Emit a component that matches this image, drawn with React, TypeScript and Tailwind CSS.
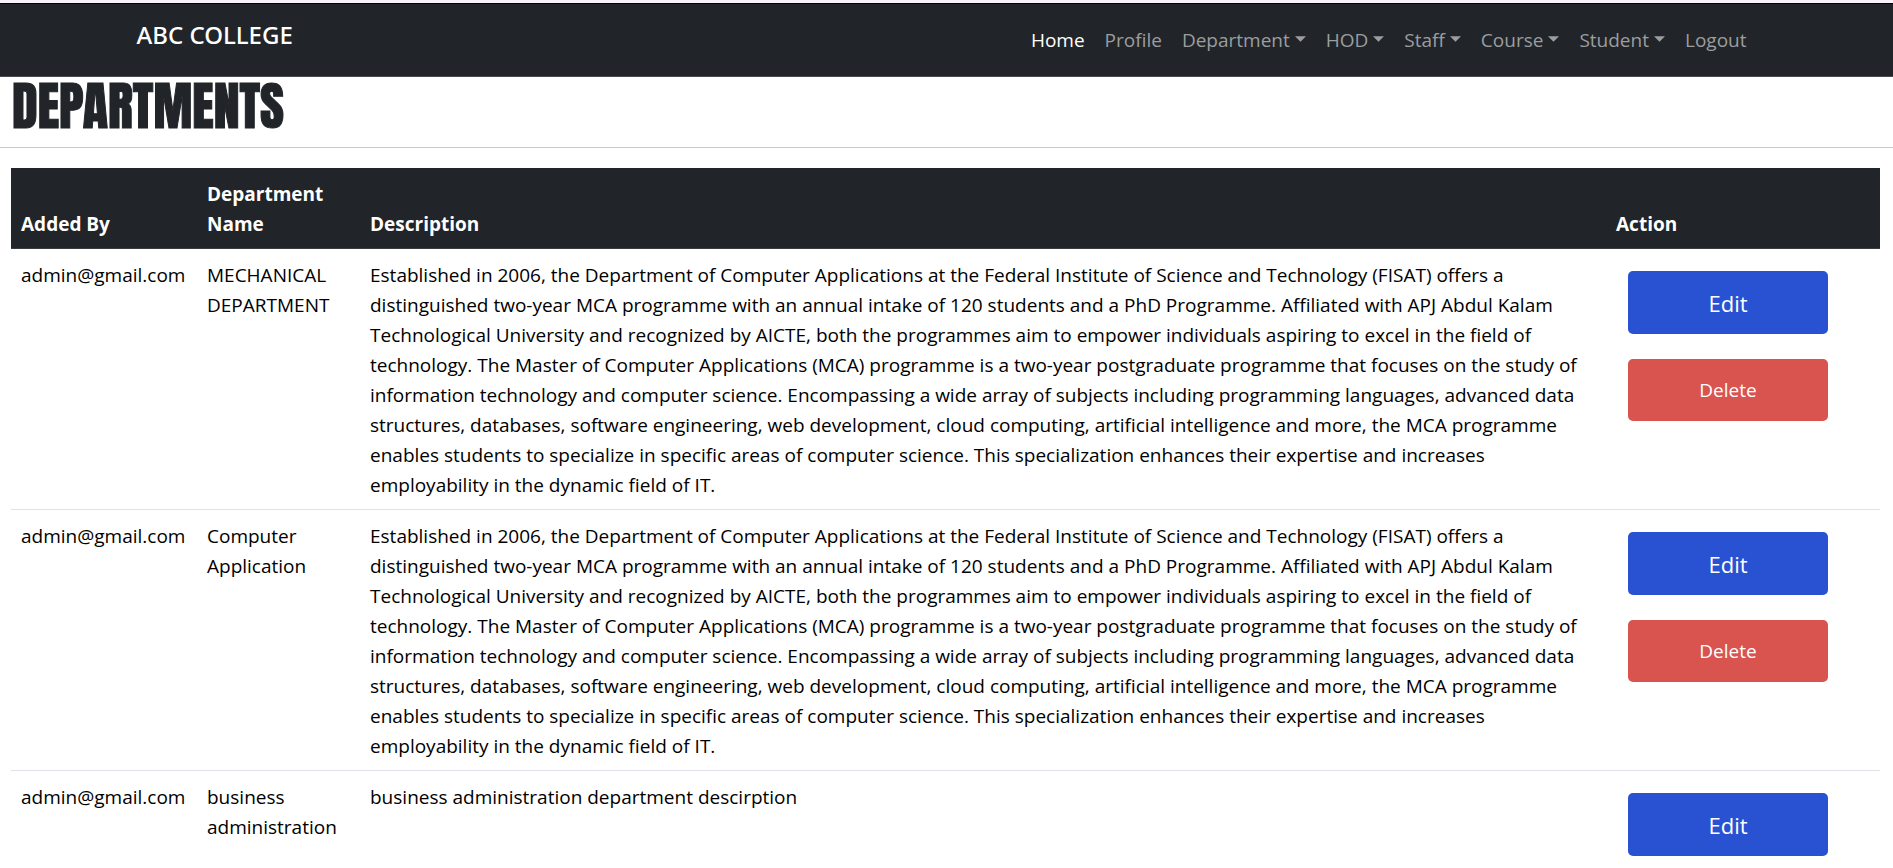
type NavLink = { label: string; menu?: boolean; active?: boolean };
type Department = { addedBy: string; name: string; description: string };

const links: NavLink[] = [
  { label: "Home", active: true },
  { label: "Profile" },
  { label: "Department", menu: true },
  { label: "HOD", menu: true },
  { label: "Staff", menu: true },
  { label: "Course", menu: true },
  { label: "Student", menu: true },
  { label: "Logout" },
];

const mcaDescription =
  "Established in 2006, the Department of Computer Applications at the Federal Institute of Science and Technology (FISAT) offers a distinguished two-year MCA programme with an annual intake of 120 students and a PhD Programme. Affiliated with APJ Abdul Kalam Technological University and recognized by AICTE, both the programmes aim to empower individuals aspiring to excel in the field of technology. The Master of Computer Applications (MCA) programme is a two-year postgraduate programme that focuses on the study of information technology and computer science. Encompassing a wide array of subjects including programming languages, advanced data structures, databases, software engineering, web development, cloud computing, artificial intelligence and more, the MCA programme enables students to specialize in specific areas of computer science. This specialization enhances their expertise and increases employability in the dynamic field of IT.";

const departments: Department[] = [
  { addedBy: "admin@gmail.com", name: "MECHANICAL DEPARTMENT", description: mcaDescription },
  { addedBy: "admin@gmail.com", name: "Computer Application", description: mcaDescription },
  {
    addedBy: "admin@gmail.com",
    name: "business administration",
    description: "business administration department descirption",
  },
];

function Caret() {
  return (
    <svg className="ml-[5px] mb-[2px] h-[6px] w-[11px]" viewBox="0 0 12 6" fill="currentColor" aria-hidden="true">
      <path d="M0 0H12L6 6Z" />
    </svg>
  );
}

function Navbar() {
  return (
    <nav className="border-t border-b border-t-black border-b-[#4b4d55] bg-[#212529]">
      <div className="mx-auto flex h-[72px] max-w-[1650px] justify-between px-[15px]">
        <a href="#" className="mt-3 font-['Noto_Sans',sans-serif] text-2xl font-medium leading-[38px] text-white">
          ABC COLLEGE
        </a>
        <ul className="flex items-center">
          {links.map((link) => (
            <li key={link.label}>
              <a
                href="#"
                className={
                  link.active
                    ? "flex items-center px-[10px] text-white"
                    : "flex items-center px-[10px] text-[#9b9d9f]"
                }
              >
                {link.label}
                {link.menu && <Caret />}
              </a>
            </li>
          ))}
        </ul>
      </div>
    </nav>
  );
}

export default function App() {
  return (
    <div className="bg-white font-['Open_Sans',sans-serif] text-[19px] leading-[30px] text-[#212529]">
      <div className="h-[3px] bg-[#f9f1fa]" />
      <Navbar />
      <main>
        <h1 className="h-[71px] border-b border-[#c8c9ca] px-3 font-['Impact','Anton','Roboto_Condensed',sans-serif] text-[52px] leading-[58px] [-webkit-text-stroke:1px_#212529]">
          DEPARTMENTS
        </h1>
        <div className="pt-5 pr-[13px] pl-[11px]">
          <table className="w-full table-fixed border-collapse text-left">
            <colgroup>
              <col className="w-[186px]" />
              <col className="w-[163px]" />
              <col />
              <col className="w-[274px]" />
            </colgroup>
            <thead className="bg-[#212529] align-bottom text-white">
              <tr className="border-b border-[#373b3e]">
                <th className="px-[10px] pt-[11px] pb-[9px] font-bold">Added By</th>
                <th className="px-[10px] pt-[11px] pb-[9px] font-bold">Department Name</th>
                <th className="px-[10px] pt-[11px] pb-[9px] font-bold">Description</th>
                <th className="px-[10px] pt-[11px] pb-[9px] font-bold">Action</th>
              </tr>
            </thead>
            <tbody className="align-top text-black">
              {departments.map((department) => (
                <tr key={department.name} className="border-b border-[#dee2e6]">
                  <td className="px-[10px] pt-[11px] pb-[9px]">{department.addedBy}</td>
                  <td className="px-[10px] pt-[11px] pb-[9px]">{department.name}</td>
                  <td className="px-[10px] pt-[11px] pb-[9px]">{department.description}</td>
                  <td className="p-[10px]">
                    <div className="m-3 flex w-[200px] flex-col gap-[25px]">
                      <button type="button" className="h-[63px] rounded-[5px] bg-[#2852d2] text-[22px] text-white">
                        Edit
                      </button>
                      <button type="button" className="h-[62px] rounded-[5px] bg-[#d9534f] text-white">
                        Delete
                      </button>
                    </div>
                  </td>
                </tr>
              ))}
            </tbody>
          </table>
        </div>
      </main>
    </div>
  );
}
